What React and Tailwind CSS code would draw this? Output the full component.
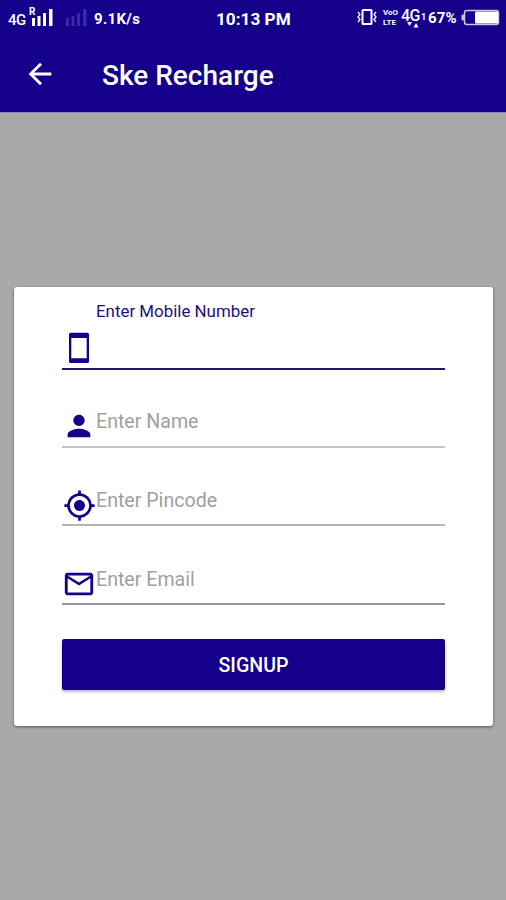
import { MdArrowBack, MdPerson, MdGpsFixed, MdMailOutline } from 'react-icons/md';

function Bars({ className }) {
  return (
    <svg className={className} width="21" height="17" viewBox="0 0 21 17" fill="currentColor">
      <rect x="0" y="9" width="3" height="8" />
      <rect x="5.5" y="7" width="3" height="10" />
      <rect x="11" y="4" width="3" height="13" />
      <rect x="17" y="0" width="3.5" height="17" />
    </svg>
  );
}

function PhoneIcon({ size, className }) {
  return (
    <svg className={className} width={size} height={size} viewBox="0 0 34 34" fill="currentColor">
      <path fillRule="evenodd" d="M8.500 1.700h17a1.500 1.500 0 0 1 1.500 1.500v27.300a1.500 1.500 0 0 1-1.500 1.500h-17a1.500 1.500 0 0 1-1.500-1.500V3.200a1.500 1.500 0 0 1 1.500-1.500zM9.300 7v20.300h15.400V7z" />
    </svg>
  );
}

function StatusBar() {
  return (
    <div className="flex h-9 items-start text-white">
      <div className="ml-2 mt-[11px] w-[20px] text-[15px] font-medium leading-[18px] tracking-[-0.6px]">4G</div>
      <div className="relative ml-1 mt-[9px]">
        <span className="absolute -left-[3px] -top-[2px] text-[10px] font-bold leading-[10px]">R</span>
        <Bars />
      </div>
      <Bars className="ml-[13px] mt-[9px] text-[#3a2aa6]" />
      <div className="ml-[7px] mt-[9px] w-[122px] text-[15px] font-bold leading-[20px] tracking-[0.3px]">9.1K/s</div>
      <div className="mt-[9px] w-[141px] whitespace-nowrap text-[17.2px] font-bold leading-[20px]">10:13 PM</div>
      <svg className="mt-[9px] shrink-0" width="20" height="16" viewBox="0 0 20 16" fill="none" stroke="currentColor" strokeWidth="2">
        <rect x="5.5" y="1" width="9" height="14" rx="0.5" />
        <path d="M1 3l2 2.5L1 8l2 2.5L1 13M19 3l-2 2.5L19 8l-2 2.5 2 2.5" strokeWidth="1.3" />
      </svg>
      <div className="ml-[6px] mt-[8px] w-[18px] text-[8px] font-bold leading-[10px]">
        <div>VoO</div>
        <div>LTE</div>
      </div>
      <div className="relative mt-[8px] w-[27px] text-[16px] font-medium leading-[16px] tracking-[-0.7px]">
        4G
        <span className="absolute left-[20px] top-[5px] text-[9px] font-bold leading-[9px]">1</span>
        <svg className="absolute left-[6px] top-[14px]" width="12" height="6" viewBox="0 0 12 6" fill="currentColor">
          <path d="M0 0h5L2.5 4zM6.500 5.500h5L9 1z" />
        </svg>
      </div>
      <div className="mt-[9px] w-[33px] text-[15px] font-bold leading-[18px] tracking-[0.2px]">67%</div>
      <svg className="mt-[9px] shrink-0" width="39" height="17" viewBox="0 0 39 17">
        <rect x="3.500" y="1.500" width="34" height="14" rx="2.500" fill="none" stroke="#c9c5ec" strokeWidth="1.500" />
        <rect x="14" y="2.500" width="23" height="12" rx="1" fill="#fff" />
        <rect x="0.500" y="5.500" width="2.500" height="6" rx="1" fill="#c9c5ec" />
      </svg>
    </div>
  );
}

function Field({ icon: Icon, size, label, className, iconClass, labelClass }) {
  return (
    <div className={'flex w-[383px] items-start ' + className}>
      <div className={'flex w-[34px] shrink-0 justify-center text-[#15008b] ' + iconClass}>
        <Icon size={size} className="shrink-0" />
      </div>
      <div className={'whitespace-nowrap ' + labelClass}>{label}</div>
    </div>
  );
}

const hint = 'mt-[6px] text-[19.6px] leading-[24px] text-[#a0a0a0]';

export default function App() {
  return (
    <div className="flex h-[900px] w-[506px] flex-col overflow-hidden bg-[#a9a9a9] font-['Roboto',sans-serif]">
      <header className="h-[113px] shrink-0 border-b border-[#8d88bd] bg-[#15008b]">
        <StatusBar />
        <div className="flex h-[76px] items-center text-white">
          <MdArrowBack size={34} className="ml-[23px]" />
          <h1 className="ml-[45px] mt-[3px] text-[28px] font-medium leading-[32px]">Ske Recharge</h1>
        </div>
      </header>
      <main className="ml-[14px] mt-[174px] flex h-[439px] w-[479px] flex-col rounded-[3px] bg-white pl-[48px] shadow-[0_1px_3px_rgba(0,0,0,0.5)]">
        <Field icon={PhoneIcon} size={34} label="Enter Mobile Number"
          className="h-[83px] border-b-2 border-[#22146f]" iconClass="mt-[44px]"
          labelClass="mt-[14px] text-[16.9px] leading-[20px] text-[#22107f]" />
        <Field icon={MdPerson} size={34} label="Enter Name"
          className="mt-[34px] h-[44px] border-b-2 border-[#c6c6c6]" iconClass="mt-[5px]"
          labelClass={hint} />
        <Field icon={MdGpsFixed} size={33} label="Enter Pincode"
          className="mt-[35px] h-[43px] border-b-2 border-[#b5b5b5]" iconClass="mt-[6px]"
          labelClass={hint} />
        <Field icon={MdMailOutline} size={34} label="Enter Email"
          className="mt-[36px] h-[43px] border-b-2 border-[#969696]" iconClass="mt-[5px]"
          labelClass={hint} />
        <button className="mt-[34px] h-[51px] w-[383px] rounded-[2px] bg-[#15008b] pt-[2px] text-[19.600px] font-medium leading-[22px] text-white shadow-[0_2px_3px_rgba(30,30,90,0.3)]">
          SIGNUP
        </button>
      </main>
    </div>
  );
}
